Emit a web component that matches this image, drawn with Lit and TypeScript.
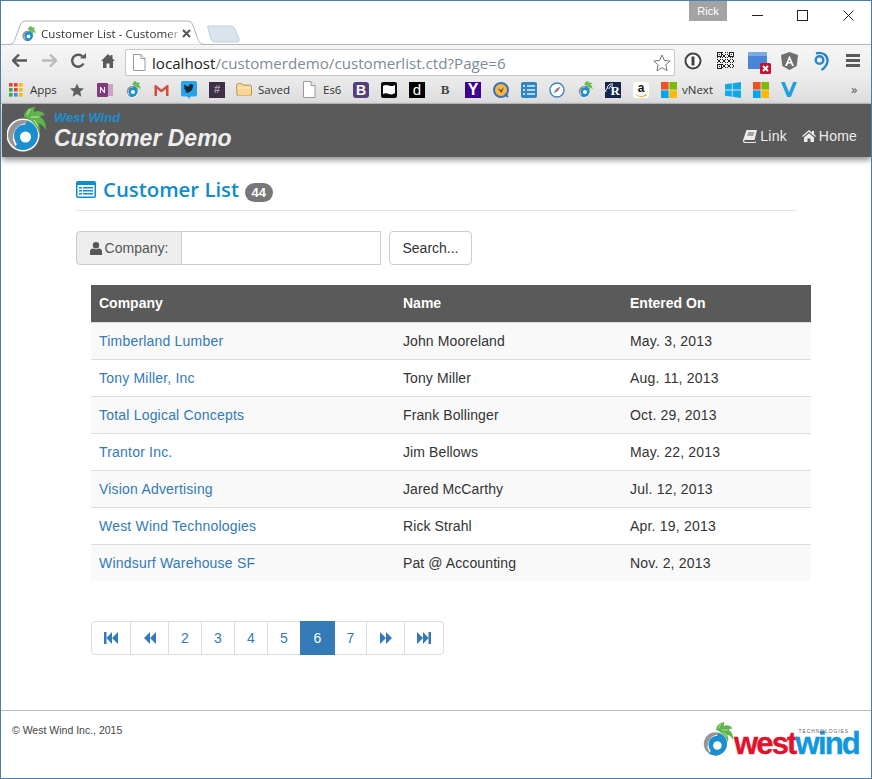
import { LitElement, html, svg, css } from 'lit';
import { customElement } from 'lit/decorators.js';

const logo = (w: number, h: number) => html`
  <svg width=${w} height=${h} viewBox="0 0 40 46">
    <circle cx="16" cy="28" r="16.500" fill="#fff" />
    <circle cx="16" cy="28" r="15" fill="#969696" />
    <path d="M20 13.500A15 15 0 1 1 8 40.700L16 28z" fill="#1b8fd0" />
    <path d="M9 38C4 30 8 19 18 17" fill="none" stroke="#fff" stroke-width="1.600" />
    <circle cx="18" cy="28.500" r="11" fill="#1b8fd0" />
    <circle cx="18.500" cy="30" r="5.500" fill="#fff" />
    <path d="M17 10C17 4 22 0 28 0c-1 2-1 3-1 5 4-2 8-1 11 3-3 0-4 1-5 2 4 2 6 6 6 13-2-4-5-6-8-7 2 3 2 7 1 10-2-7-7-13-15-16z" fill="#5fb548" />
    <path d="M24 10l8 0M27 13l4 6M20 8l3-6" stroke="#e7f3e0" stroke-width=".8" fill="none" />
  </svg>`;

const fileIcon = html`<svg width="13" height="17" viewBox="0 0 13 17"><path d="M.5.5h7.500l4 4v12H.5z" fill="#fff" stroke="#9a9a9a" /><path d="M8 .5v4h4" fill="#eee" stroke="#9a9a9a" /></svg>`;

const msLogo = html`<svg width="16" height="16" viewBox="0 0 16 16"><rect width="7.600" height="7.600" fill="#f25022" /><rect x="8.400" width="7.600" height="7.600" fill="#7fba00" /><rect y="8.400" width="7.600" height="7.600" fill="#00a4ef" /><rect x="8.400" y="8.400" width="7.600" height="7.600" fill="#ffb900" /></svg>`;

// 17 cell code: three finder squares, the rest a fixed scatter
const QR_SIZE = 17;
const qrOn = (x: number, y: number) => {
  const finder = (fx: number, fy: number) => {
    const dx = x - fx;
    const dy = y - fy;
    if (dx < 0 || dy < 0 || dx > 4 || dy > 4) return null;
    return dx === 0 || dy === 0 || dx === 4 || dy === 4 || (dx === 2 && dy === 2);
  };
  const hit = finder(0, 0) ?? finder(12, 0) ?? finder(0, 12);
  if (hit !== null) return hit;
  return (x * 7 + y * 13 + x * y * 3) % 5 < 2;
};
const qrCells = Array.from({ length: QR_SIZE * QR_SIZE }, (_, i) => [i % QR_SIZE, Math.floor(i / QR_SIZE)])
  .filter(([x, y]) => qrOn(x, y));

interface Bookmark { icon: unknown; label?: string; before?: number; total?: number; textGap?: number }

const bookmarks: Bookmark[] = [
  { icon: html`<svg width="14" height="14" viewBox="0 0 14 14">
      ${['#ea4335', '#ea4335', '#fbbc05', '#34a853', '#ea4335', '#fbbc05', '#34a853', '#4285f4', '#fbbc05'].map(
        (c, i) => svg`<rect x=${(i % 3) * 5} y=${Math.floor(i / 3) * 5} width="3.600" height="3.600" fill=${c} />`)}
    </svg>`, label: 'Apps', total: 54, textGap: 7 },
  { icon: html`<svg width="14" height="14" viewBox="0 0 14 14"><path d="M7 .5l2 4.600 5 .4-3.800 3.300 1.200 4.900L7 11.100l-4.400 2.600 1.200-4.900L0 5.500l5-.4z" fill="#5f5f5f" /></svg>` },
  { icon: html`<svg width="16" height="16" viewBox="0 0 16 16"><rect x="8" y="2" width="8" height="12" fill="#c9a3c6" /><rect y="1" width="11" height="14" rx="1" fill="#80397b" /><path d="M3 11V5h1l3 4V5h1v6H7L4 7v4z" fill="#fff" /></svg>` },
  { icon: logo(15, 17) },
  { icon: html`<svg width="15" height="12" viewBox="0 0 15 12"><path d="M.5 12V1h1.500l5.500 4.500L13 1h1.500v11h-2.500V5L7.500 8.500 3 5v7z" fill="#d54b3d" /></svg>` },
  { icon: html`<svg width="16" height="18" viewBox="0 0 16 18"><rect width="16" height="15.500" rx="2" fill="#2aa3ef" /><path d="M6 15h4l-2 3z" fill="#2aa3ef" /><path d="M3 11c5 2 9-1 9-6l1.200-1.400-1.500.3c-1-1.500-4-1-3.700 1.600-2 0-3.500-1-4.500-2-.7 1.300-.2 2.500.7 3.200L3 6.500c0 1 .7 2 2 2.300l-1 .1c.3.800 1.200 1.300 2 1.400-.8.600-2 .9-3 .7z" fill="#1c2733" /></svg>` },
  { icon: html`<span class="slack">#</span>` },
  { before: 5, icon: html`<svg width="16" height="13" viewBox="0 0 16 13"><path d="M.5 2.500q0-2 2-2h3l1.500 1.500h6.500q2 0 2 2v7q0 2-2 2h-11q-1.500 0-1.500-2z" fill="#f7d595" stroke="#b89455" /><path d="M1 5h14" stroke="#fff0cf" /></svg>`, label: 'Saved', total: 67, textGap: 6 },
  { icon: fileIcon, label: 'Es6', total: 44, textGap: 7 },
  { icon: html`<span class="boot">B</span>` },
  { icon: html`<svg width="16" height="16" viewBox="0 0 16 16"><rect width="16" height="16" rx="2" fill="#0b0b0b" /><path d="M2 4v8c2-1 3-1 6 0s4 0 6-1V3c-2 1-3 1.500-6 .5S4 3 2 4z" fill="#fff" /></svg>` },
  { icon: html`<span class="dee">d</span>` },
  { icon: html`<span class="serif-b">B</span>` },
  { icon: html`<span class="yahoo">Y</span>` },
  { icon: html`<svg width="16" height="16" viewBox="0 0 16 16"><circle cx="8" cy="8" r="7" fill="#f2b84b" stroke="#3e70b5" stroke-width="2" /><path d="M4.500 6l3.500 2 3-3-2.500 6z" fill="#6d4a16" /><path d="M12 12l3 3" stroke="#3e70b5" stroke-width="2" /></svg>` },
  { icon: html`<svg width="16" height="16" viewBox="0 0 16 16"><rect width="16" height="16" rx="2" fill="#2f86c1" /><path d="M6 4h8M6 8h8M6 12h8" stroke="#dff0fa" stroke-width="1.600" /><circle cx="3" cy="4" r="1" fill="#fff" /><circle cx="3" cy="8" r="1" fill="#fff" /><circle cx="3" cy="12" r="1" fill="#fff" /></svg>` },
  { icon: html`<svg width="16" height="16" viewBox="0 0 16 16"><circle cx="8" cy="8" r="7" fill="#fff" stroke="#3f85c6" stroke-width="1.400" /><path d="M11.500 4.500L9 9 7 7z" fill="#d9534f" /><path d="M4.500 11.500L7 7l2 2z" fill="#3f85c6" /></svg>` },
  { icon: logo(15, 17) },
  { icon: html`<span class="rr"><svg width="16" height="16" viewBox="0 0 16 16"><path d="M2 7a5 5 0 0 1 6-5M4 7a3 3 0 0 1 4-3" fill="none" stroke="#fff" /><path d="M1 10a2 2 0 0 1 1-3" fill="none" stroke="#fff" /></svg><b>R</b></span>` },
  { icon: html`<span class="amazon">a<svg width="13" height="5" viewBox="0 0 13 5"><path d="M0 .5c3 3.500 8 3.500 11 1M11 0l1.500 2-2 .5" stroke="#f90" stroke-width="1.200" fill="none" /></svg></span>` },
  { before: 6, icon: msLogo, label: 'vNext', total: 58, textGap: 5 },
  { icon: html`<svg width="16" height="16" viewBox="0 0 16 16"><path d="M0 2.300l6.800-1v6.300H0zM7.600 1.200L16 0v7.600H7.600zM0 8.400h6.800v6.300l-6.800-1zM7.600 8.400H16V16l-8.400-1.200z" fill="#12a8e8" /></svg>` },
  { icon: msLogo },
  { icon: html`<svg width="16" height="15" viewBox="0 0 16 15"><path d="M0 0h3.800L8 10.500 12.200 0H16L9.800 15H6.200z" fill="#1ea1dc" /></svg>` },
];

@customElement('browser-chrome')
export class BrowserChrome extends LitElement {
  static styles = css`
    :host { display: block; font-family: 'Open Sans', 'Liberation Sans', sans-serif; }
    .strip { height: 43px; background: #fff; display: flex; position: relative; }
    .tab {
      position: absolute; left: 7px; top: 19px; width: 204px; height: 25px;
      display: flex; align-items: center; z-index: 1;
    }
    .tab > svg.shape { position: absolute; left: 0; top: 0; }
    .tab-logo { position: relative; margin: 2px 0 0 14px; display: flex; }
    .tab-title {
      position: relative; margin: 2px 0 0 5px; width: 137px; overflow: hidden; white-space: nowrap;
      font-size: 11.600px; color: #333;
      -webkit-mask-image: linear-gradient(90deg, #000 92%, rgba(0, 0, 0, .3));
      mask-image: linear-gradient(90deg, #000 92%, rgba(0, 0, 0, .3));
    }
    .tab-close { position: relative; margin: 2px 0 0 4px; display: flex; }
    .ghost { position: absolute; left: 206px; top: 24px; }
    .rick {
      position: absolute; left: 688px; top: 0; width: 38px; height: 20px;
      background: #a3a3a3; color: #fff; font: 11px 'Liberation Sans', sans-serif;
      display: flex; align-items: center; justify-content: center;
    }
    .win { position: absolute; top: 9px; }
    .toolbar {
      height: 32px; border-top: 1px solid #b7b7b7; box-sizing: border-box;
      background: linear-gradient(#f6f6f6, #ececec); display: flex; align-items: center; position: relative;
    }
    .nav { width: 29.500px; display: flex; justify-content: center; flex: none; }
    .nav:first-child { margin-left: 4px; }
    .address {
      margin: 4px 0 0 2px; width: 550px; height: 27px; background: #fff; border: 1px solid #c8c8c8;
      border-radius: 2px; display: flex; align-items: center; padding-left: 7px; box-sizing: border-box; flex: none;
    }
    .url { margin-left: 6px; font-size: 15.150px; white-space: nowrap; color: #7d8a96; flex: 1; }
    .url b { font-weight: 400; color: #222; }
    .star { margin-right: 3px; display: flex; }
    .tools { display: flex; align-items: center; margin-left: 2px; }
    .tool { width: 32px; display: flex; justify-content: center; align-items: center; position: relative; }
    .badge { position: absolute; left: 19px; top: 12px; }
    .bookmarks {
      height: 27px; background: linear-gradient(#ececec, #dddddd); display: flex; align-items: center;
      padding-left: 8px; font-size: 11.500px; color: #333; position: relative;
      border-bottom: 1px solid #bdbdbd;
    }
    .bm { display: flex; align-items: center; justify-content: center; width: 28px; flex: none; height: 18px; }
    .bm.label { justify-content: flex-start; }
    .bm-text { white-space: nowrap; }
    .more { position: absolute; left: 850px; top: 4px; font-size: 13px; color: #555; }
    .slack, .boot, .dee, .serif-b, .yahoo, .rr, .amazon {
      width: 16px; height: 16px; display: flex; align-items: center; justify-content: center;
      font-family: 'Liberation Sans', sans-serif; font-weight: 700; line-height: 1;
    }
    .slack { background: #3f2e45; color: #a9a0ad; font-size: 11px; }
    .boot { background: #563d7c; color: #fff; font-size: 14px; border-radius: 3px; }
    .dee { background: #000; color: #fff; font-size: 15px; font-weight: 400; }
    .serif-b { color: #444; font: 700 13px 'Liberation Serif', serif; }
    .yahoo { background: #400191; color: #fff; font-size: 16px; }
    .rr { background: #14264d; color: #fff; position: relative; justify-content: flex-end; }
    .rr svg { position: absolute; left: 0; top: 0; }
    .rr b { font: 700 13px 'Liberation Serif', serif; margin: 3px 1px 0 0; }
    .amazon { background: #fff; color: #111; font-size: 12px; border-radius: 3px; flex-direction: column; }
    .amazon svg { display: block; }
  `;

  render() {
    return html`
      <div class="strip">
        <div class="tab">
          <svg class="shape" width="204" height="25" viewBox="0 0 204 25">
            <path d="M0 24.500c5 0 6-2 8-8l4-11c1-3 3-4.500 6-4.500h161c3 0 5 1.500 6 4.500l4 11c2 6 3 8 8 8" fill="#fff" stroke="#b0b0b0" />
          </svg>
          <span class="tab-logo">${logo(14, 16)}</span>
          <span class="tab-title">Customer List - Customer</span>
          <span class="tab-close"><svg width="9" height="9" viewBox="0 0 9 9"><path d="M1 1l7 7M8 1L1 8" stroke="#555" stroke-width="2" /></svg></span>
        </div>
        <svg class="ghost" width="34" height="18" viewBox="0 0 34 18">
          <path d="M1 1h23c2 0 3 1 4 3l4 10c.5 2 0 3-2 3H8c-2 0-3-1-4-3L1 3.500C.5 2 0 1 1 1z" fill="#d9e4ec" stroke="#c4ced6" />
        </svg>
        <div class="rick">Rick</div>
        <svg class="win" style="left:751px" width="11" height="11" viewBox="0 0 11 11"><path d="M0 5.500h11" stroke="#222" /></svg>
        <svg class="win" style="left:796px" width="11" height="11" viewBox="0 0 11 11"><rect x=".5" y=".5" width="10" height="10" fill="none" stroke="#222" /></svg>
        <svg class="win" style="left:842px" width="11" height="11" viewBox="0 0 11 11"><path d="M.5.500l10 10M10.500.500l-10 10" stroke="#222" /></svg>
      </div>
      <div class="toolbar">
        <span class="nav"><svg width="15" height="13" viewBox="0 0 15 13"><path d="M7 .5L1 6.500l6 6M1.500 6.500H15" fill="none" stroke="#5a5a5a" stroke-width="2.400" /></svg></span>
        <span class="nav"><svg width="15" height="13" viewBox="0 0 15 13"><path d="M8 .5l6 6-6 6M13.500 6.500H0" fill="none" stroke="#b9b9b9" stroke-width="2.400" /></svg></span>
        <span class="nav"><svg width="15" height="15" viewBox="0 0 15 15"><path d="M12.500 10.500A6 6 0 1 1 11.500 3.500" fill="none" stroke="#5a5a5a" stroke-width="2.400" /><path d="M9 5.500h6v-5.500z" fill="#5a5a5a" /></svg></span>
        <span class="nav"><svg width="14" height="14" viewBox="0 0 14 14"><path d="M7 0L0 7h2v7h3.500V9.500h3V14H12V7h2l-2.500-2.500V1h-2v1.500z" fill="#5a5a5a" /></svg></span>
        <div class="address">
          ${fileIcon}
          <span class="url"><b>localhost</b>/customerdemo/customerlist.ctd?Page=6</span>
          <span class="star"><svg width="18" height="18" viewBox="0 0 18 18"><path d="M9 1l2.400 5.400 5.800.6-4.400 3.900 1.300 5.800L9 13.700l-5.100 3 1.300-5.800L.8 7l5.800-.6z" fill="#fff" stroke="#777" /></svg></span>
        </div>
        <div class="tools">
          <span class="tool"><svg width="18" height="18" viewBox="0 0 18 18"><circle cx="9" cy="9" r="7.500" fill="#fff" stroke="#444" stroke-width="2" /><path d="M7.500 4.500h3v9h-3z" fill="#444" /></svg></span>
          <span class="tool"><svg width="17" height="17" viewBox="0 0 17 17" shape-rendering="crispEdges">
            ${qrCells.map(([x, y]) => svg`<rect x=${x} y=${y} width="1" height="1" fill="#222" />`)}
          </svg></span>
          <span class="tool"><svg width="19" height="19" viewBox="0 0 19 19"><rect y="1" width="19" height="17" fill="#4a86d8" /><rect y="1" width="19" height="4" fill="#7fa9e2" /></svg><svg class="badge" width="11" height="11" viewBox="0 0 11 11"><rect width="11" height="11" rx="1.500" fill="#c8102e" /><path d="M3 3l5 5M8 3L3 8" stroke="#fff" stroke-width="2" /></svg></span>
          <span class="tool"><svg width="17" height="18" viewBox="0 0 17 18"><path d="M8.500 0L17 3l-1.300 11L8.500 18 1.300 14 0 3z" fill="#6f6f6f" /><path d="M8.500 3.500L4 14h2l1-2.500h3L11 14h2zM8.500 7.500l1 2.500h-2z" fill="#fff" /></svg></span>
          <span class="tool"><svg width="16" height="20" viewBox="0 0 16 20"><path d="M3 2.500C9 .5 15 4 14.500 10c-.3 4-3 7-6 9" fill="none" stroke="#2a86c8" stroke-width="2.400" /><circle cx="6.500" cy="9" r="3.800" fill="none" stroke="#2a86c8" stroke-width="2.400" /></svg></span>
          <span class="tool"><svg width="14" height="13" viewBox="0 0 14 13"><path d="M0 0h14v3H0zM0 5h14v3H0zM0 10h14v3H0z" fill="#5a5a5a" /></svg></span>
        </div>
      </div>
      <div class="bookmarks">
        ${bookmarks.map(b => b.label
          ? html`<span class="bm label" style="width:${b.total}px;margin-left:${b.before ?? 0}px;gap:${b.textGap}px">${b.icon}<span class="bm-text">${b.label}</span></span>`
          : html`<span class="bm">${b.icon}</span>`)}
        <span class="more">»</span>
      </div>`;
  }
}

@customElement('app-navbar')
export class AppNavbar extends LitElement {
  static styles = css`
    :host {
      display: flex; justify-content: space-between; height: 53px; background: #5a5a5a;
      box-shadow: 0 3px 6px rgba(0, 0, 0, .45); font-family: 'Liberation Sans', sans-serif;
      position: relative; margin-left: 1px; flex: none;
    }
    .brand { display: flex; padding: 3px 0 0 5px; }
    .titles { margin-left: 7px; font-style: italic; font-weight: 700; }
    .small { color: #1b8fd0; font-size: 13px; line-height: 14px; margin-top: 4px; }
    .big { color: #eee; font-size: 23px; line-height: 24px; margin-top: 1px; }
    .links { display: flex; gap: 15px; padding: 24px 14px 0 0; color: #ededed; font-size: 14px; letter-spacing: .2px; }
    .link { display: flex; gap: 3px; align-items: flex-start; }
    .link svg { margin-top: 2px; }
  `;

  render() {
    return html`
      <div class="brand">
        ${logo(40, 46)}
        <div class="titles">
          <div class="small">West Wind</div>
          <div class="big">Customer Demo</div>
        </div>
      </div>
      <div class="links">
        <span class="link"><svg width="14" height="13" viewBox="0 0 14 13"><path d="M3.500 0H14l-2.500 10H2c-.8 0-1 .8-.8 1.200.2.500.6.800 1.300.800H12l1-1v1.500L12 13H2C.5 13-.3 11.500.1 10z" fill="#ededed" /><path d="M5 3h6M4.500 5h6" stroke="#5a5a5a" /></svg>Link</span>
        <span class="link"><svg width="14" height="12" viewBox="0 0 14 12"><path d="M7 0L0 6l.8 1L7 1.800 13.200 7l.8-1-2-1.700V1h-2v1.600z" fill="#ededed" /><path d="M2 7.500L7 3.300l5 4.200V12H8.500V8.500h-3V12H2z" fill="#ededed" /></svg>Home</span>
      </div>`;
  }
}

interface Customer { company: string; name: string; entered: string }

const customers: Customer[] = [
  { company: 'Timberland Lumber', name: 'John Mooreland', entered: 'May. 3, 2013' },
  { company: 'Tony Miller, Inc', name: 'Tony Miller', entered: 'Aug. 11, 2013' },
  { company: 'Total Logical Concepts', name: 'Frank Bollinger', entered: 'Oct. 29, 2013' },
  { company: 'Trantor Inc.', name: 'Jim Bellows', entered: 'May. 22, 2013' },
  { company: 'Vision Advertising', name: 'Jared McCarthy', entered: 'Jul. 12, 2013' },
  { company: 'West Wind Technologies', name: 'Rick Strahl', entered: 'Apr. 19, 2013' },
  { company: 'Windsurf Warehouse SF', name: 'Pat @ Accounting', entered: 'Nov. 2, 2013' },
];

const pageIcon = (d: string) => html`<svg width="14" height="12" viewBox="0 0 14 12"><path d=${d} fill="#337ab7" /></svg>`;

const pages = [
  { w: 40, label: pageIcon('M0 0h2.500v12H0zM8 0v12L2.500 6zM14 0v12L8 6z') },
  { w: 39, label: pageIcon('M7 0v12L1 6zM13 0v12L7 6z') },
  { w: 34, label: '2' }, { w: 34, label: '3' }, { w: 34, label: '4' }, { w: 34, label: '5' },
  { w: 35, label: '6', active: true }, { w: 33, label: '7' },
  { w: 39, label: pageIcon('M1 0v12l6-6zM7 0v12l6-6z') },
  { w: 40, label: pageIcon('M0 0v12l6-6zM6 0v12l5.500-6zM11.500 0H14v12h-2.500z') },
];

@customElement('app-root')
export class AppRoot extends LitElement {
  static styles = css`
    :host {
      display: flex; flex-direction: column; width: 872px; height: 779px; box-sizing: border-box;
      border: 1px solid #4b7cab; background: #fff; overflow: hidden;
      font-family: 'Liberation Sans', sans-serif; font-size: 14px; color: #333;
    }
    main { flex: 1; padding: 0 75px; }
    h2 {
      margin: 15px 0 0; padding-bottom: 4px; height: 34px; box-sizing: content-box; border-bottom: 1px solid #e4e4e4;
      font: 600 20.350px 'Open Sans', sans-serif; color: #0e8ccb; display: flex; align-items: center;
    }
    h2 svg { margin-right: 7px; }
    .count {
      margin: 6px 0 0 6px; background: #777; color: #fff; border-radius: 10px; padding: 3px 6.500px;
      font: 700 13px/13px 'Liberation Sans', sans-serif;
    }
    form { display: flex; margin: 20px 0 0; }
    .addon {
      height: 34px; box-sizing: border-box; width: 106px; background: #eee; border: 1px solid #ccc;
      border-radius: 4px 0 0 4px; color: #555; display: flex; align-items: center; justify-content: center; gap: 3px;
    }
    .input { width: 199px; height: 34px; box-sizing: border-box; border: 1px solid #ccc; border-left: 0; background: #fff; }
    .btn {
      margin-left: 8px; width: 83px; height: 34px; box-sizing: border-box; background: #fff; border: 1px solid #ccc;
      border-radius: 4px; display: flex; align-items: center; justify-content: center; color: #333;
    }
    table { margin: 20px 0 0 15px; width: 720px; border-collapse: collapse; table-layout: fixed; }
    th {
      background: #5a5a5a; color: #fff; text-align: left; font-weight: 700; height: 37px; padding: 0 8px;
      border-bottom: 1px solid #ddd; box-sizing: border-box;
    }
    td { height: 37px; padding: 0 8px; box-sizing: border-box; border-top: 1px solid #ddd; letter-spacing: .2px; }
    td:nth-child(2) { letter-spacing: .1px; }
    tbody tr:first-child td { border-top: 0; }
    tbody tr:nth-child(odd) td { background: #f9f9f9; }
    a { color: #337ab7; text-decoration: none; }
    nav.pager { display: flex; margin: 40px 0 0 15px; }
    .page {
      height: 34px; box-sizing: border-box; border: 1px solid #ddd; margin-left: -1px; background: #fff; color: #337ab7;
      display: flex; align-items: center; justify-content: center;
    }
    .page:first-child { margin-left: 0; border-radius: 4px 0 0 4px; }
    .page:last-child { border-radius: 0 4px 4px 0; }
    .page.active { background: #337ab7; border-color: #337ab7; color: #fff; position: relative; }
    footer {
      height: 68px; flex: none; box-sizing: border-box; border-top: 1px solid #bbb; display: flex; justify-content: space-between;
      padding: 11px 12px 0 11px; font-size: 10.500px; color: #444;
    }
    .copy { margin-top: 2px; }
    .ww { display: flex; align-items: flex-end; height: 36px; position: relative; }
    .ww-text {
      font: 700 31px/20px 'Liberation Sans', sans-serif; letter-spacing: -1.800px; color: #e2122d; margin: 0 0 4px 0;
      -webkit-text-stroke: .4px currentColor;
    }
    .ww-text span { color: #1098dd; }
    .ww-tech {
      position: absolute; right: 10px; top: 6px; font-size: 5px; letter-spacing: .9px; color: #666; line-height: 6px;
    }
  `;

  render() {
    return html`
      <browser-chrome></browser-chrome>
      <app-navbar></app-navbar>
      <main>
        <h2>
          <svg width="20" height="17" viewBox="0 0 20 17"><path d="M2 0h16a2 2 0 0 1 2 2v13a2 2 0 0 1-2 2H2a2 2 0 0 1-2-2V2a2 2 0 0 1 2-2z" fill="#0e8ccb" /><rect x="1.500" y="4" width="17" height="11.500" fill="#fff" /><path d="M3 6h3v1.500H3zM7 6h10v1.500H7zM3 9h3v1.500H3zM7 9h10v1.500H7zM3 12h3v1.500H3zM7 12h10v1.500H7z" fill="#0e8ccb" /></svg>
          Customer List <span class="count">44</span>
        </h2>
        <form>
          <span class="addon"><svg width="12" height="13" viewBox="0 0 12 13"><circle cx="6" cy="3.300" r="3.200" fill="#555" /><path d="M0 13V9.500C0 7.500 1.500 6.500 3 6.500c1 1 5 1 6 0 1.500 0 3 1 3 3V13z" fill="#555" /></svg>Company:</span>
          <span class="input"></span>
          <span class="btn">Search...</span>
        </form>
        <table>
          <colgroup><col style="width:304px" /><col style="width:227px" /><col /></colgroup>
          <thead><tr><th>Company</th><th>Name</th><th>Entered On</th></tr></thead>
          <tbody>
            ${customers.map(c => html`<tr><td><a>${c.company}</a></td><td>${c.name}</td><td>${c.entered}</td></tr>`)}
          </tbody>
        </table>
        <nav class="pager">
          ${pages.map(p => html`<span class="page ${p.active ? 'active' : ''}" style="width:${p.w}px">${p.label}</span>`)}
        </nav>
      </main>
      <footer>
        <span class="copy">© West Wind Inc., 2015</span>
        <span class="ww">${logo(31, 36)}<span class="ww-text">west<span>wind</span></span><span class="ww-tech">TECHNOLOGIES</span></span>
      </footer>`;
  }
}
